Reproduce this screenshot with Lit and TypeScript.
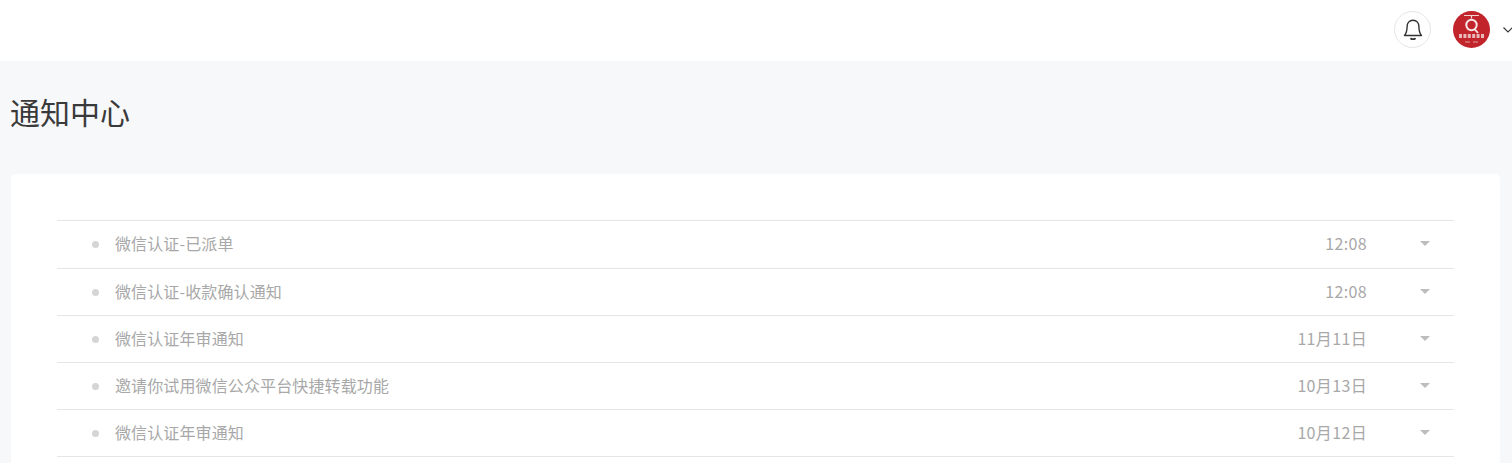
import { LitElement, html, css } from "lit";
import { customElement } from "lit/decorators.js";

const rows = [
  ["微信认证-已派单", "12:08"],
  ["微信认证-收款确认通知", "12:08"],
  ["微信认证年审通知", "11月11日"],
  ["邀请你试用微信公众平台快捷转载功能", "10月13日"],
  ["微信认证年审通知", "10月12日"],
];

@customElement("app-root")
export class AppRoot extends LitElement {
  static styles = css`
    :host { display: block; height: 463px; overflow: hidden; background: #f7f8fa; font-family: "Noto Sans CJK SC", "Liberation Sans", sans-serif; }
    .top { height: 61px; background: #fff; display: flex; align-items: center; justify-content: flex-end; box-sizing: border-box; padding: 0 0 2px 0; }
    .bell { width: 37px; height: 37px; border: 1px solid #e5e5e5; border-radius: 50%; box-sizing: border-box; display: flex; align-items: center; justify-content: center; margin-right: 22px; }
    .avatar { width: 37px; height: 37px; display: block; margin-right: 13px; }
    .chev { width: 10px; height: 6px; display: block; margin-right: -1px; }
    h1 { margin: 0; padding: 30px 0 0 10px; height: 80px; box-sizing: border-box; font-size: 30px; line-height: 40px; font-weight: 400; color: #3a3a3a; }
    .card { margin: 33px 12px 0 11px; background: #fff; border-radius: 5px; padding: 46px 46px 0 46px; height: 300px; box-sizing: border-box; }
    .row { display: flex; align-items: center; border-top: 1px solid #e6e6e6; height: 46px; color: #a8a8a8; font-size: 16px; line-height: 24px; }
    .row.first { height: 46px; padding-bottom: 1px; }
    .dot { width: 7px; height: 7px; border-radius: 50%; background: #d5d5d7; margin: 0 16px 0 35px; flex: none; }
    .title { flex: 1; position: relative; top: -1px; letter-spacing: 0.12px; }
    .time { margin-right: 53px; position: relative; top: -1px; letter-spacing: 0.35px; }
    .caret { width: 0; height: 0; border-left: 5px solid transparent; border-right: 5px solid transparent; border-top: 5px solid #bdbdbd; margin-right: 24px; margin-top: -2px; }
  `;

  render() {
    return html`
      <div class="top">
        <div class="bell">
          <svg width="24" height="24" viewBox="0 0 24 24" fill="none" stroke="#333" stroke-width="1.4" stroke-linejoin="round" stroke-linecap="round">
            <path d="M12 2.2c-3.9 0-5.9 3-5.9 6.3 0 4.8-1 7.1-2.6 9h17c-1.6-1.9-2.6-4.2-2.6-9 0-3.3-2-6.3-5.9-6.3z"/>
            <path d="M10 20.6c.6.8 3.4.8 4 0" stroke-width="1.8"/>
          </svg>
        </div>
        <svg class="avatar" viewBox="0 0 37 37">
          <circle cx="18.5" cy="18.5" r="18.5" fill="#c2242c"/>
          <path d="M11 4.5h15M18.5 4.5v3" stroke="#f0d2d2" stroke-width="1.2" fill="none"/>
          <circle cx="18.5" cy="14" r="5.2" fill="none" stroke="#f6e6e6" stroke-width="2"/>
          <path d="M21.5 18l3.5 4" stroke="#f6e6e6" stroke-width="1.8"/>
          <path d="M6 25h25" stroke="#e9b8b8" stroke-width="4" stroke-dasharray="3 1.4"/>
          <path d="M12 31h5M20 31h5" stroke="#e0a0a0" stroke-width="1"/>
        </svg>
        <svg class="chev" viewBox="0 0 10 6" fill="none" stroke="#333" stroke-width="1.1"><path d="M.5.5L5 5 9.5.5"/></svg>
      </div>
      <h1>通知中心</h1>
      <div class="card">
        ${rows.map((r, i) => html`
          <div class="row ${i === 0 ? "first" : ""}">
            <span class="dot"></span>
            <span class="title">${r[0]}</span>
            <span class="time">${r[1]}</span>
            <span class="caret"></span>
          </div>`)}
        <div class="row"></div>
      </div>
    `;
  }
}
